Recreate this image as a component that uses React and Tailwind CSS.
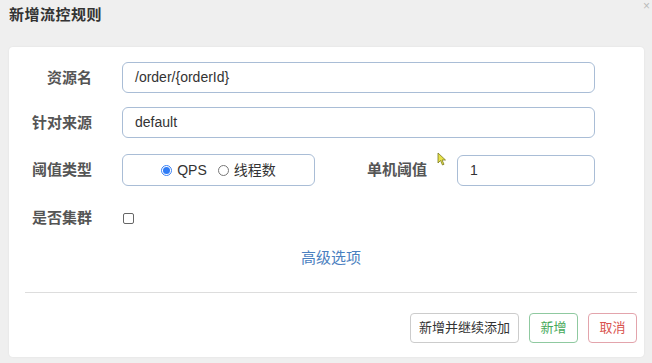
import React from 'react';

const cjk = { fontFamily: '"Liberation Sans", "Noto Sans CJK SC", sans-serif' };

function Label({ children, className = '' }) {
  return (
    <div className={`text-[15px] font-bold text-[#555] text-right leading-[20px] ${className}`}>
      {children}
    </div>
  );
}

export default function App() {
  return (
    <div style={cjk} className="relative w-[652px] h-[363px] bg-[#efefef] overflow-hidden">
      {/* Header */}
      <div className="h-[47px] px-[9px] pt-[5px]">
        <div className="text-[15px] font-bold text-[#333] leading-[20px] tracking-[0.5px]">新增流控规则</div>
      </div>
      <span className="absolute right-[2px] top-[0px] text-[12px] leading-[12px] text-[#bbb]">×</span>

      {/* Panel */}
      <div className="ml-[9px] mr-[8px] h-[310px] bg-white rounded-[4px] shadow-[0_0_2px_rgba(0,0,0,0.08)] flex flex-col">
        <div className="flex items-center mt-[15px] h-[31px]">
          <Label className="w-[83px]">资源名</Label>
          <div className="ml-[30px] w-[473px] h-full border border-[#a9bdd6] rounded-[6px] flex items-center px-[12px] text-[14px] text-[#333]">
            /order/{'{'}orderId{'}'}
          </div>
        </div>

        <div className="flex items-center mt-[14px] h-[31px]">
          <Label className="w-[83px]">针对来源</Label>
          <div className="ml-[30px] w-[473px] h-full border border-[#a9bdd6] rounded-[6px] flex items-center px-[12px] text-[14px] text-[#333]">
            default
          </div>
        </div>

        <div className="flex items-center mt-[16px] h-[32px]">
          <Label className="w-[83px]">阈值类型</Label>
          <div className="ml-[30px] w-[193px] h-full border border-[#a9bdd6] rounded-[6px] flex items-center justify-center gap-[6px] text-[14px] text-[#333]">
            <span className="flex items-center gap-[5px]">
              <span className="w-[11px] h-[11px] rounded-full border border-[#3b82f6] flex items-center justify-center">
                <span className="w-[7px] h-[7px] rounded-full bg-[#2f7cf6]" />
              </span>
              QPS
            </span>
            <span className="flex items-center gap-[5px] ml-[5px]">
              <span className="w-[11px] h-[11px] rounded-full border border-[#777]" />
              线程数
            </span>
          </div>
          <div className="relative">
            <Label className="ml-[51px] w-[61px]">单机阈值</Label>
            <svg className="absolute left-[122px] top-[-8px]" width="10" height="14" viewBox="0 0 10 14">
              <path d="M1 1 L1 11 L3.5 8.5 L5.5 13 L7 12.3 L5 8 L8.5 8 Z" fill="#e8e24a" stroke="#7a7a20" strokeWidth="0.8" />
            </svg>
          </div>
          <div className="ml-[30px] w-[138px] h-[31px] border border-[#a9bdd6] rounded-[6px] flex items-center px-[12px] text-[14px] text-[#333]">
            1
          </div>
        </div>

        <div className="flex items-center mt-[22px] h-[20px]">
          <Label className="w-[83px]">是否集群</Label>
          <span className="ml-[31px] w-[11px] h-[11px] rounded-[2px] border border-[#666]" />
        </div>

        <div className="mt-[20px] text-center text-[15px] text-[#4a80c0] leading-[20px] pl-[9px]">高级选项</div>

        <div className="ml-[16px] mr-[7px] mt-[24px] border-t border-[#ddd]" />

        <div className="flex justify-end gap-[10px] mr-[7px] mt-[20px]">
          <button className="w-[109px] h-[30px] border border-[#ccc] rounded-[4px] text-[13px] text-[#333] bg-white">
            新增并继续添加
          </button>
          <button className="w-[49px] h-[30px] border border-[#8fc9a0] rounded-[4px] text-[13px] text-[#46a95a] bg-white">
            新增
          </button>
          <button className="w-[49px] h-[30px] border border-[#e3a4ac] rounded-[4px] text-[13px] text-[#d9534f] bg-white">
            取消
          </button>
        </div>
      </div>
    </div>
  );
}
